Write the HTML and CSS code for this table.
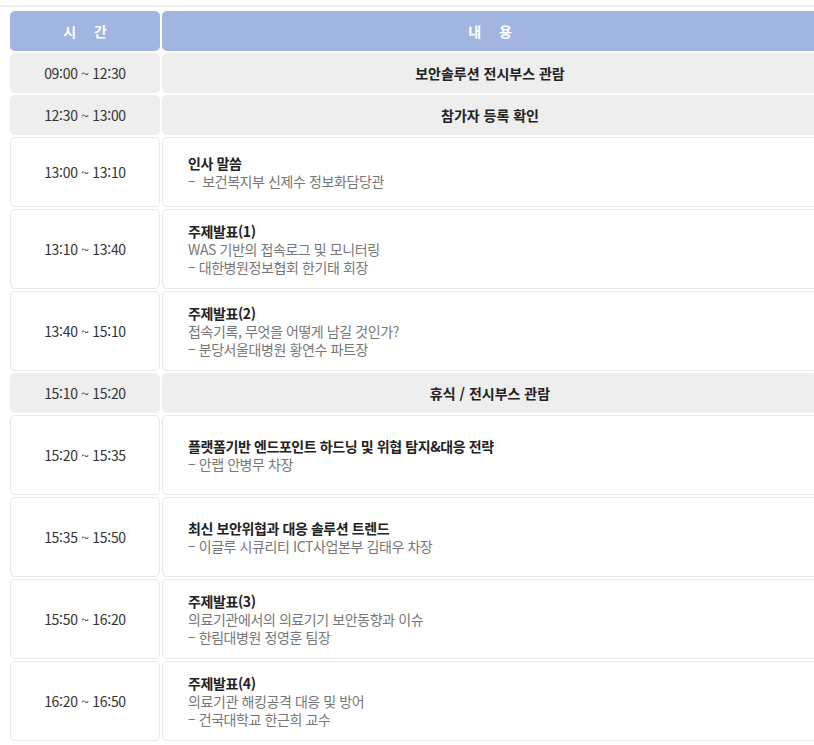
FILE: index.html
```html
<!doctype html>
<html lang="ko">
  <head>
    <meta charset="UTF-8" />
    <meta name="viewport" content="width=device-width, initial-scale=1.0" />
    <title>행사 일정</title>
    <link rel="stylesheet" href="styles.css">
  </head>
  <body>
    <div class="rule"></div>
    <table class="schedule">
      <thead>
        <tr>
          <th class="col-time">시 간</th>
          <th class="col-desc">내 용</th>
        </tr>
      </thead>
      <tbody>
        <tr class="short shade">
          <td class="time">09:00 ~ 12:30</td>
          <td class="desc center">보안솔루션 전시부스 관람</td>
        </tr>
        <tr class="short shade">
          <td class="time">12:30 ~ 13:00</td>
          <td class="desc center">참가자 등록 확인</td>
        </tr>
        <tr class="mid">
          <td class="time">13:00 ~ 13:10</td>
          <td class="desc">
            <p class="title">인사 말씀</p>
            <p class="sub">–&nbsp; 보건복지부 신제수 정보화담당관</p>
          </td>
        </tr>
        <tr class="tall">
          <td class="time">13:10 ~ 13:40</td>
          <td class="desc">
            <p class="title">주제발표(1)</p>
            <p class="sub">WAS 기반의 접속로그 및 모니터링</p>
            <p class="sub">– 대한병원정보협회 한기태 회장</p>
          </td>
        </tr>
        <tr class="tall">
          <td class="time">13:40 ~ 15:10</td>
          <td class="desc">
            <p class="title">주제발표(2)</p>
            <p class="sub">접속기록, 무엇을 어떻게 남길 것인가?</p>
            <p class="sub">– 분당서울대병원 황연수 파트장</p>
          </td>
        </tr>
        <tr class="short shade">
          <td class="time">15:10 ~ 15:20</td>
          <td class="desc center">휴식 / 전시부스 관람</td>
        </tr>
        <tr class="tall">
          <td class="time">15:20 ~ 15:35</td>
          <td class="desc">
            <p class="title">플랫폼기반 엔드포인트 하드닝 및 위협 탐지&amp;대응 전략</p>
            <p class="sub">– 안랩 안병무 차장</p>
          </td>
        </tr>
        <tr class="tall">
          <td class="time">15:35 ~ 15:50</td>
          <td class="desc">
            <p class="title">최신 보안위협과 대응 솔루션 트렌드</p>
            <p class="sub">– 이글루 시큐리티 ICT사업본부 김태우 차장</p>
          </td>
        </tr>
        <tr class="tall">
          <td class="time">15:50 ~ 16:20</td>
          <td class="desc">
            <p class="title">주제발표(3)</p>
            <p class="sub">의료기관에서의 의료기기 보안동향과 이슈</p>
            <p class="sub">– 한림대병원 정영훈 팀장</p>
          </td>
        </tr>
        <tr class="tall">
          <td class="time">16:20 ~ 16:50</td>
          <td class="desc">
            <p class="title">주제발표(4)</p>
            <p class="sub">의료기관 해킹공격 대응 및 방어</p>
            <p class="sub">– 건국대학교 한근희 교수</p>
          </td>
        </tr>
      </tbody>
    </table>
  </body>
</html>
```

FILE: styles.css
```css
* {
    box-sizing: border-box;
    margin: 0;
    padding: 0;
}

body {
    font-family: "Noto Sans CJK KR", "Noto Sans", sans-serif;
    font-size: 14px;
    color: #333;
    background: #fff;
    overflow: hidden;
}

.rule {
    margin-top: 5px;
    height: 2px;
    background: #efefef;
}

.schedule {
    margin: 2px 0 0 8px;
    width: 812px;
    border-collapse: separate;
    border-spacing: 2px;
    table-layout: fixed;
}

.schedule th,
.schedule td {
    border-radius: 5px;
    vertical-align: middle;
}

.schedule th {
    height: 40px;
    background: #a1b5e0;
    color: #fff;
    font-size: 14px;
    font-weight: 700;
    word-spacing: 14px;
    text-align: center;
}

.col-time {
    width: 150px;
}

.schedule td {
    border: 1px solid #e8e8e8;
    background: #fff;
}

.short td {
    height: 40px;
}

.mid td {
    height: 70px;
}

.tall td {
    height: 80px;
}

.shade td {
    background: #eeeeee;
    border-color: #eeeeee;
}

.time {
    text-align: center;
    letter-spacing: -0.3px;
    color: #333;
}

.desc {
    padding-left: 25px;
    line-height: 18px;
}

.desc.center {
    padding-left: 0;
    text-align: center;
    font-weight: 700;
    color: #222;
}

.title {
    font-weight: 700;
    color: #222;
    letter-spacing: -0.4px;
}

.sub {
    color: #777;
    letter-spacing: -0.4px;
}
```
